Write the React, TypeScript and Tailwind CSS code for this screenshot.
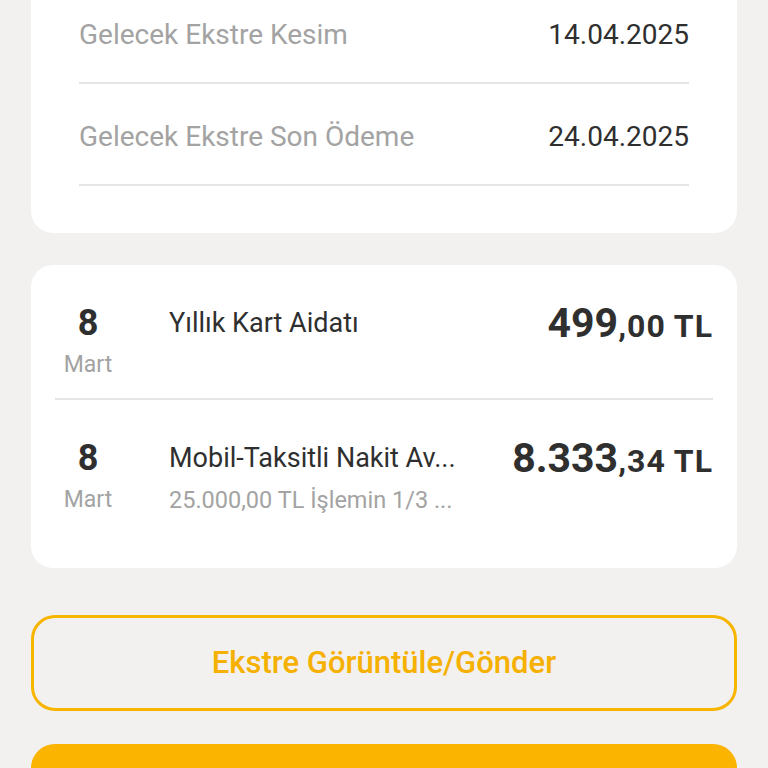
export default function App() {
  const rows = [
    { label: 'Gelecek Ekstre Kesim', value: '14.04.2025' },
    { label: 'Gelecek Ekstre Son Ödeme', value: '24.04.2025' },
  ];

  const txns = [
    { day: '8', month: 'Mart', title: 'Yıllık Kart Aidatı', sub: '', main: '499', cents: ',00 TL' },
    {
      day: '8',
      month: 'Mart',
      title: 'Mobil-Taksitli Nakit Av...',
      sub: '25.000,00 TL İşlemin 1/3 ...',
      main: '8.333',
      cents: ',34 TL',
    },
  ];

  return (
    <div
      className="min-h-[768px] w-full overflow-hidden bg-[#f2f1ef] px-[31px] pb-10"
      style={{ fontFamily: 'Roboto, "Noto Sans", sans-serif' }}
    >
      {/* Statement dates */}
      <div className="-mt-[40px] rounded-[22px] bg-white px-[48px] pt-[22px] pb-[47px]">
        {rows.map(r => (
          <div
            key={r.label}
            className="flex h-[102px] items-center justify-between border-b-2 border-[#e6e6e6] pt-[5px]"
          >
            <span className="text-[28px] text-[#a3a3a3]">{r.label}</span>
            <span className="text-[28px] text-[#2f2f2f]">{r.value}</span>
          </div>
        ))}
      </div>

      {/* Transactions */}
      <div className="mt-[32px] rounded-[22px] bg-white px-[24px]">
        {txns.map((t, i) => (
          <div
            key={i}
            className={
              i === 0
                ? 'flex items-start border-b-2 border-[#e6e6e6] pt-[38px] pb-[18px]'
                : 'flex items-start pt-[38px] pb-[53px]'
            }
          >
            <div className="flex w-[66px] flex-col items-center gap-[7px]">
              <span className="text-[36px] leading-[40px] font-bold text-[#2f2f2f]">{t.day}</span>
              <span className="text-[23px] leading-[30px] text-[#a3a3a3]">{t.month}</span>
            </div>
            <div className="ml-[48px] flex min-w-0 flex-1 flex-col gap-[7px]">
              <span className="truncate text-[27px] leading-[40px] text-[#2f2f2f]">{t.title}</span>
              {t.sub ? (
                <span className="truncate text-[23.5px] leading-[30px] text-[#a3a3a3]">{t.sub}</span>
              ) : (
                <span className="h-[30px]" />
              )}
            </div>
            <div className="flex h-[40px] items-baseline font-bold text-[#2f2f2f]">
              <span className="text-[41px] leading-[40px]">{t.main}</span>
              <span className="text-[32px] leading-[40px] tracking-[1px]">{t.cents}</span>
            </div>
          </div>
        ))}
      </div>

      {/* Actions */}
      <button className="mt-[47px] flex h-[96px] w-full items-center justify-center rounded-[24px] border-[3px] border-[#f7b500] pt-[1px] text-[31px] font-medium text-[#f5b000]">
        Ekstre Görüntüle/Gönder
      </button>
      <button className="mt-[33px] flex h-[96px] w-full items-center justify-center rounded-[24px] bg-[#fbb400] text-[31px] font-medium text-white">
        Ödeme Yap
      </button>
    </div>
  );
}
